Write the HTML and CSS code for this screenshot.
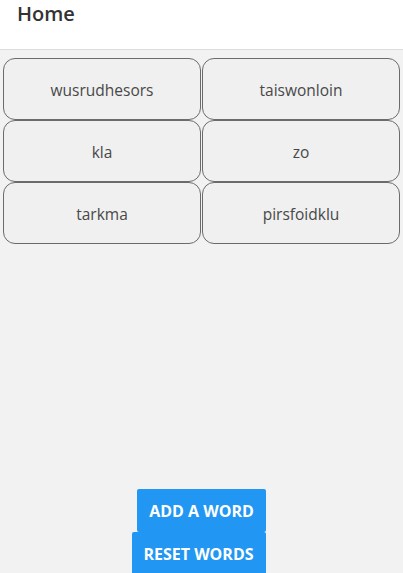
FILE: index.html
```html
<!DOCTYPE html>
<html>
<head>
<meta charset="utf-8">
<link rel="stylesheet" href="styles.css">
</head>
<body>
<div class="app">
  <header class="header"><h1 class="title">Home</h1></header>
  <div class="grid">
    <div class="card">wusrudhesors</div>
    <div class="card">taiswonloin</div>
    <div class="card">kla</div>
    <div class="card">zo</div>
    <div class="card">tarkma</div>
    <div class="card">pirsfoidklu</div>
  </div>
  <div class="spacer"></div>
  <div class="actions">
    <button class="btn btn-add">ADD A WORD</button>
    <button class="btn btn-reset">RESET WORDS</button>
  </div>
</div>
</body>
</html>
```
FILE: styles.css
```css
html, body {
  margin: 0;
  padding: 0;
  height: 573px;
  overflow: hidden;
  background: #f2f2f2;
  font-family: "Open Sans", "Noto Sans", sans-serif;
}
.app {
  display: flex;
  flex-direction: column;
  height: 575px;
}
.header {
  height: 50px;
  background: #fff;
  border-bottom: 1px solid #dcdcdc;
  box-sizing: border-box;
  padding: 0 0 0 17px;
}
.title {
  margin: 0;
  font-size: 20px;
  font-weight: 600;
  color: #333;
  line-height: 28px;
}
.grid {
  display: grid;
  grid-template-columns: 198px 198px;
  column-gap: 1px;
  padding: 8px 3px 0 3px;
}
.card {
  height: 62px;
  box-sizing: border-box;
  border: 1px solid #6b6b6b;
  border-radius: 12px;
  display: flex;
  align-items: center;
  justify-content: center;
  padding-top: 2px;
  font-size: 15.5px;
  color: #484848;
  background: #f0f0f0;
}
.spacer { flex: 1; }
.actions {
  display: flex;
  flex-direction: column;
  align-items: center;
}
.btn {
  border: none;
  background: #2196f3;
  color: #fff;
  font-family: "Open Sans", "Noto Sans", sans-serif;
  font-weight: 700;
  font-size: 16px;
  height: 43px;
  border-radius: 2px;
  padding: 0;
}
.btn-add { width: 129px; }
.btn-reset { width: 134px; margin-left: -6px; }
```
